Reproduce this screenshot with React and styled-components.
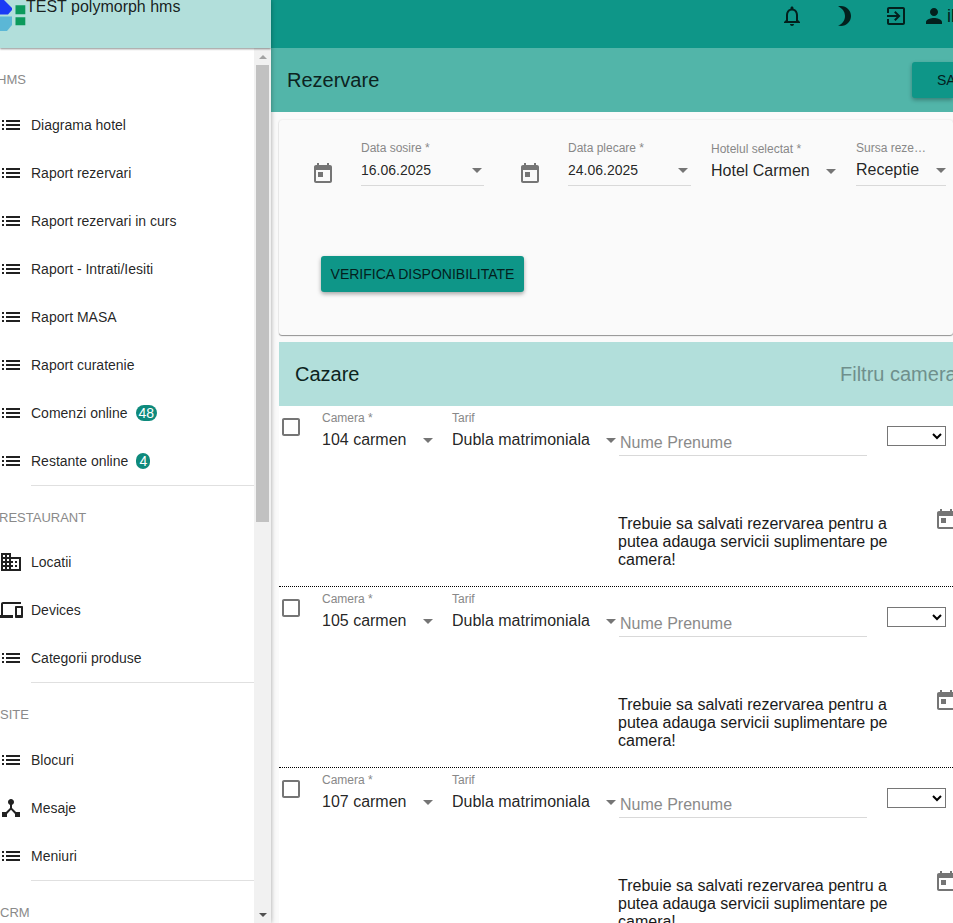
import React from 'react';
import styled, { createGlobalStyle } from 'styled-components';

const Global = createGlobalStyle`
  html, body { margin: 0; padding: 0; height: 100%; overflow: hidden; background: #fafafa; }
  body { font-family: "Liberation Sans", Arial, sans-serif; color: rgba(0,0,0,.87); }
  * { box-sizing: border-box; }
`;

const Page = styled.div`display: flex; width: 953px; height: 923px; overflow: hidden;`;

const Sidebar = styled.aside`
  flex: 0 0 271px; display: flex; flex-direction: column; background: #fff;
  box-shadow: 0 0 5px rgba(0,0,0,.35); position: relative; z-index: 2; overflow: hidden;
`;
const Brand = styled.header`
  flex: 0 0 48px; display: flex; align-items: flex-start; background: #b2dfdb;
  box-shadow: 0 1px 2px rgba(0,0,0,.45); position: relative; z-index: 1; overflow: hidden;
`;
const Logo = styled.svg`flex: none; width: 26px; height: 32px;`;
const BrandName = styled.span`font-size: 16px; line-height: 18px; margin-top: -2px; white-space: nowrap;`;
const SideBody = styled.div`flex: 1; min-height: 0; display: flex;`;
const Nav = styled.nav`flex: 1; min-width: 0; overflow: hidden;`;
const SectionLabel = styled.div`
  height: 52.6px; padding-top: 22px; font-size: 13px; line-height: 20px; color: #8a8a8a;
  white-space: nowrap; margin-left: ${p => p.$shift}px;
`;
const NavRow = styled.div`
  height: 48px; display: flex; align-items: center; gap: 8px; margin-left: -1px; font-size: 14px; white-space: nowrap;
`;
const NavIcon = styled.svg`flex: none; width: 24px; height: 24px; fill: #212121;`;
const Badge = styled.span`
  height: 16px; min-width: 14px; padding: 0 3px; border-radius: 8px; background: #0e8a7c; color: #fff;
  font-size: 14px; line-height: 16px; text-align: center; margin-left: 0;
`;
const Divider = styled.hr`height: 1px; border: 0; margin: 0 0 0 31px; background: #e0e0e0;`;
const ScrollTrack = styled.div`
  flex: 0 0 17px; display: flex; flex-direction: column; align-items: center; background: #f1f1f1;
`;
const ScrollArrow = styled.div`
  flex: none; height: 17px; width: 17px; display: flex; align-items: center; justify-content: center;
  &::before {
    content: ""; width: 0; height: 0; border-left: 4px solid transparent; border-right: 4px solid transparent;
    ${p => p.$down ? 'border-top: 4px solid #505050;' : 'border-bottom: 4px solid #a3a3a3;'}
  }
`;
const ScrollThumb = styled.div`flex: 0 0 457px; width: 13px; background: #c1c1c1;`;
const ScrollRest = styled.div`flex: 1;`;

const Main = styled.main`flex: 1; min-width: 0; display: flex; flex-direction: column; overflow: hidden;`;
const AppBar = styled.div`flex: 0 0 48px; display: flex; align-items: flex-start; padding: 4px 0 0 509px; background: #0e9688;`;
const BarIcon = styled.svg`flex: none; width: 24px; height: 24px; fill: #03201d; margin-right: ${p => p.$gap}px;`;
const UserName = styled.span`font-size: 18px; line-height: 24px; margin-left: 1px; white-space: nowrap; color: #03201d;`;
const Toolbar = styled.div`
  flex: 0 0 64px; display: flex; align-items: center; justify-content: space-between; padding-left: 16px;
  background: #52b5a9; overflow: hidden;
`;
const PageTitle = styled.h1`margin: 0; font-size: 20px; font-weight: 400; color: #0c2320;`;
const SaveButton = styled.button`
  flex: 0 0 41px; height: 36px; padding: 0 0 0 25px; border: 0; border-radius: 3px 0 0 3px; overflow: hidden; text-align: left;
  background: #0e9688; color: #03201d; font: 14px "Liberation Sans", Arial, sans-serif; white-space: nowrap;
  box-shadow: 0 2px 4px rgba(0,0,0,.3);
`;
const Content = styled.div`flex: 1; min-height: 0; padding: 8px 0 0 8px; background: #fafafa; overflow: hidden;`;
const FilterCard = styled.section`
  height: 215px; padding: 21px 0 0 32px; background: #fafafa; border-radius: 3px;
  box-shadow: 0 1px 1px rgba(0,0,0,.4), 0 0 2px rgba(0,0,0,.12);
`;
const FilterRow = styled.div`display: flex; align-items: flex-end;`;
const GreyIcon = styled.svg`flex: none; width: 24px; height: 24px; fill: #757575;`;
const DateIcon = styled(GreyIcon)`margin-right: 26px;`;
const Field = styled.div`
  flex: none; position: relative; width: ${p => p.$w}px; margin-left: ${p => p.$ml || 0}px;
`;
const FieldLabel = styled.div`
  font-size: 12px; line-height: 14px; color: #888; white-space: nowrap;
`;
const FieldValue = styled.div`
  height: ${p => p.$plain ? 30 : 31}px; line-height: 30px; font-size: ${p => p.$small ? 14 : 16}px; white-space: nowrap;
  border-bottom: ${p => p.$plain ? 0 : '1px solid #d9d9d9'};
`;
const Caret = styled.svg`
  position: absolute; width: 24px; height: 24px; top: 17px; right: ${p => p.$r}px; fill: #757575;
`;
const CheckButton = styled.button`
  display: block; height: 36px; width: 203px; margin: 70px 0 0 10px; padding: 0; border: 0; border-radius: 3px;
  background: #0e9688; color: #03201d; font: 14px "Liberation Sans", Arial, sans-serif; white-space: nowrap;
  box-shadow: 0 2px 4px rgba(0,0,0,.35);
`;
const RoomsHeader = styled.div`
  margin-top: 7px; height: 64px; display: flex; align-items: center; justify-content: space-between;
  padding-left: 16px; background: #b2dfdb; overflow: hidden;
`;
const RoomsTitle = styled.h2`margin: 0; font-size: 20px; font-weight: 400; color: #0c2320;`;
const RoomFilter = styled.span`flex: 0 0 113px; font-size: 20px; color: #6f8f8c; white-space: nowrap; overflow: hidden;`;
const Room = styled.article`
  height: 181px; padding-top: 5px; background: #fff; border-bottom: 1px dotted #000; overflow: hidden;
`;
const RoomTop = styled.div`display: flex; align-items: flex-start; height: 45px;`;
const CheckIcon = styled(GreyIcon)`margin-top: 4px;`;
const NameInput = styled.input`
  flex: none; width: 248px; height: 25px; margin-top: 20px; padding: 0 0 0 1px; border: 0; border-bottom: 1px solid #d9d9d9;
  background: transparent; font: 16px "Liberation Sans", Arial, sans-serif; outline: none;
  &::placeholder { color: #8a8a8a; opacity: 1; }
`;
const GuestSelect = styled.select`flex: none; width: 59px; height: 20px; margin: 15px 0 0 20px; background: #fff;`;
const RoomExtra = styled.div`display: flex; align-items: flex-start; padding: 52px 0 0 339px;`;
const Notice = styled.p`flex: none; width: 280px; margin: 7px 36px 0 0; font-size: 16px; line-height: 18px; color: #1a1a1a;`;

const LIST = 'M3 13h2v-2H3v2zm0 4h2v-2H3v2zm0-8h2V7H3v2zm4 4h14v-2H7v2zm0 4h14v-2H7v2zM7 7v2h14V7H7z';
const DOMAIN = 'M12 7V3H2v18h20V7H12zM6 19H4v-2h2v2zm0-4H4v-2h2v2zm0-4H4V9h2v2zm0-4H4V5h2v2zm4 12H8v-2h2v2zm0-4H8v-2h2v2zm0-4H8V9h2v2zm0-4H8V5h2v2zm10 12h-8v-2h2v-2h-2v-2h2v-2h-2V9h8v10zm-2-8h-2v2h2v-2zm0 4h-2v2h2v-2z';
const DEVICES = 'M4 6h18V4H4c-1.1 0-2 .9-2 2v11H0v3h14v-3H4V6zm19 2h-6c-.55 0-1 .45-1 1v10c0 .55.45 1 1 1h6c.55 0 1-.45 1-1V9c0-.55-.45-1-1-1zm-1 9h-4v-7h4v7z';
const HUB = 'M17 16l-4-4V8.82C14.16 8.4 15 7.3 15 6c0-1.66-1.34-3-3-3S9 4.34 9 6c0 1.3.84 2.4 2 2.82V12l-4 4H3v5h5v-3.05l4-4.2 4 4.2V21h5v-5h-4z';
const TODAY = 'M19 3h-1V1h-2v2H8V1H6v2H5c-1.11 0-1.99.9-1.99 2L3 19c0 1.1.89 2 2 2h14c1.1 0 2-.9 2-2V5c0-1.1-.9-2-2-2zm0 16H5V8h14v11zM7 10h5v5H7z';
const BOX = 'M19 5v14H5V5h14m0-2H5c-1.1 0-2 .9-2 2v14c0 1.1.9 2 2 2h14c1.1 0 2-.9 2-2V5c0-1.1-.9-2-2-2z';
const BELL = 'M12 22c1.1 0 2-.9 2-2h-4c0 1.1.9 2 2 2zm6-6v-5c0-3.07-1.63-5.64-4.5-6.32V4c0-.83-.67-1.5-1.5-1.5s-1.5.67-1.5 1.5v.68C7.64 5.36 6 7.92 6 11v5l-2 2v1h16v-1l-2-2zm-2 1H8v-6c0-2.48 1.51-4.5 4-4.5s4 2.02 4 4.5v6z';
const MOON = 'M9 2c-1.05 0-2.05.16-3 .46 4.06 1.27 7 5.06 7 9.54 0 4.48-2.94 8.27-7 9.54.95.3 1.95.46 3 .46 5.52 0 10-4.48 10-10S14.52 2 9 2z';
const EXIT = 'M10.09 15.59L11.5 17l5-5-5-5-1.41 1.41L12.67 11H3v2h9.67l-2.58 2.59zM19 3H5c-1.11 0-2 .9-2 2v4h2V5h14v14H5v-4H3v4c0 1.1.89 2 2 2h14c1.1 0 2-.9 2-2V5c0-1.1-.9-2-2-2z';
const PERSON = 'M12 12c2.21 0 4-1.79 4-4s-1.79-4-4-4-4 1.79-4 4 1.79 4 4 4zm0 2c-2.67 0-8 1.34-8 4v2h16v-2c0-2.66-5.33-4-8-4z';
const ARROW = 'M7 10l5 5 5-5z';

const sections = [
  { label: 'HMS', shift: -3, items: [
    ['Diagrama hotel', LIST], ['Raport rezervari', LIST], ['Raport rezervari in curs', LIST], ['Raport - Intrati/Iesiti', LIST],
    ['Raport MASA', LIST], ['Raport curatenie', LIST], ['Comenzi online', LIST, 48], ['Restante online', LIST, 4],
  ] },
  { label: 'RESTAURANT', shift: -1, items: [['Locatii', DOMAIN], ['Devices', DEVICES], ['Categorii produse', LIST]] },
  { label: 'SITE', shift: 0, items: [['Blocuri', LIST], ['Mesaje', HUB], ['Meniuri', LIST]] },
  { label: 'CRM', shift: 0, items: [] },
];
const rooms = ['104 carmen', '105 carmen', '107 carmen'];

const Icon = ({ as: C, d, ...rest }) => <C viewBox="0 0 24 24" {...rest}><path d={d} /></C>;

function SelectField({ label, value, w, ml, plain, small, caret }) {
  return (
    <Field $w={w} $ml={ml}>
      <FieldLabel>{label}</FieldLabel>
      <FieldValue $plain={plain} $small={small}>{value}</FieldValue>
      <Icon as={Caret} d={ARROW} $r={caret} />
    </Field>
  );
}

export default function App() {
  return (
    <Page>
      <Global />
      <Sidebar>
        <Brand>
          <Logo viewBox="0 0 26 32">
            <path d="M0 0h4l8 8v2l-4 4.5H0z" fill="#1a3cf5" />
            <path d="M0 16.5h12V25l-5 6H0z" fill="#5bb7d6" />
            <path d="M15.5 5.3h9.8v9h-9.800zM15.500 17.300h9.800v8h-9.800z" fill="#0b9a5c" />
          </Logo>
          <BrandName>TEST polymorph hms</BrandName>
        </Brand>
        <SideBody>
          <Nav>
            {sections.map((s, i) => (
              <React.Fragment key={s.label}>
                <SectionLabel $shift={s.shift}>{s.label}</SectionLabel>
                {s.items.map(([t, d, n]) => (
                  <NavRow key={t}>
                    <Icon as={NavIcon} d={d} />
                    <span>{t}</span>
                    {n !== undefined && <Badge>{n}</Badge>}
                  </NavRow>
                ))}
                {i < sections.length - 1 && <Divider />}
              </React.Fragment>
            ))}
          </Nav>
          <ScrollTrack>
            <ScrollArrow />
            <ScrollThumb />
            <ScrollRest />
            <ScrollArrow $down />
          </ScrollTrack>
        </SideBody>
      </Sidebar>
      <Main>
        <AppBar>
          <Icon as={BarIcon} d={BELL} $gap={28} />
          <Icon as={BarIcon} d={MOON} $gap={28} />
          <Icon as={BarIcon} d={EXIT} $gap={14} />
          <Icon as={BarIcon} d={PERSON} $gap={0} />
          <UserName>il</UserName>
        </AppBar>
        <Toolbar>
          <PageTitle>Rezervare</PageTitle>
          <SaveButton>SALVEAZA</SaveButton>
        </Toolbar>
        <Content>
          <FilterCard>
            <FilterRow>
              <Icon as={DateIcon} d={TODAY} />
              <SelectField label="Data sosire *" value="16.06.2025" w={123} small caret={-5} />
              <Icon as={DateIcon} d={TODAY} style={{ marginLeft: 34 }} />
              <SelectField label="Data plecare *" value="24.06.2025" w={123} small caret={-4} />
              <SelectField label="Hotelul selectat *" value="Hotel Carmen" w={125} ml={20} plain caret={-7} />
              <SelectField label="Sursa reze…" value="Receptie" w={90} ml={20} caret={-7} />
            </FilterRow>
            <CheckButton>VERIFICA DISPONIBILITATE</CheckButton>
          </FilterCard>
          <RoomsHeader>
            <RoomsTitle>Cazare</RoomsTitle>
            <RoomFilter>Filtru camera</RoomFilter>
          </RoomsHeader>
          {rooms.map(r => (
            <Room key={r}>
              <RoomTop>
                <Icon as={CheckIcon} d={BOX} />
                <SelectField label="Camera *" value={r} w={115} ml={19} plain caret={-3} />
                <SelectField label="Tarif" value="Dubla matrimoniala" w={167} ml={15} plain caret={-4} />
                <NameInput placeholder="Nume Prenume" />
                <GuestSelect />
              </RoomTop>
              <RoomExtra>
                <Notice>Trebuie sa salvati rezervarea pentru a putea adauga servicii suplimentare pe camera!</Notice>
                <Icon as={GreyIcon} d={TODAY} />
              </RoomExtra>
            </Room>
          ))}
        </Content>
      </Main>
    </Page>
  );
}
